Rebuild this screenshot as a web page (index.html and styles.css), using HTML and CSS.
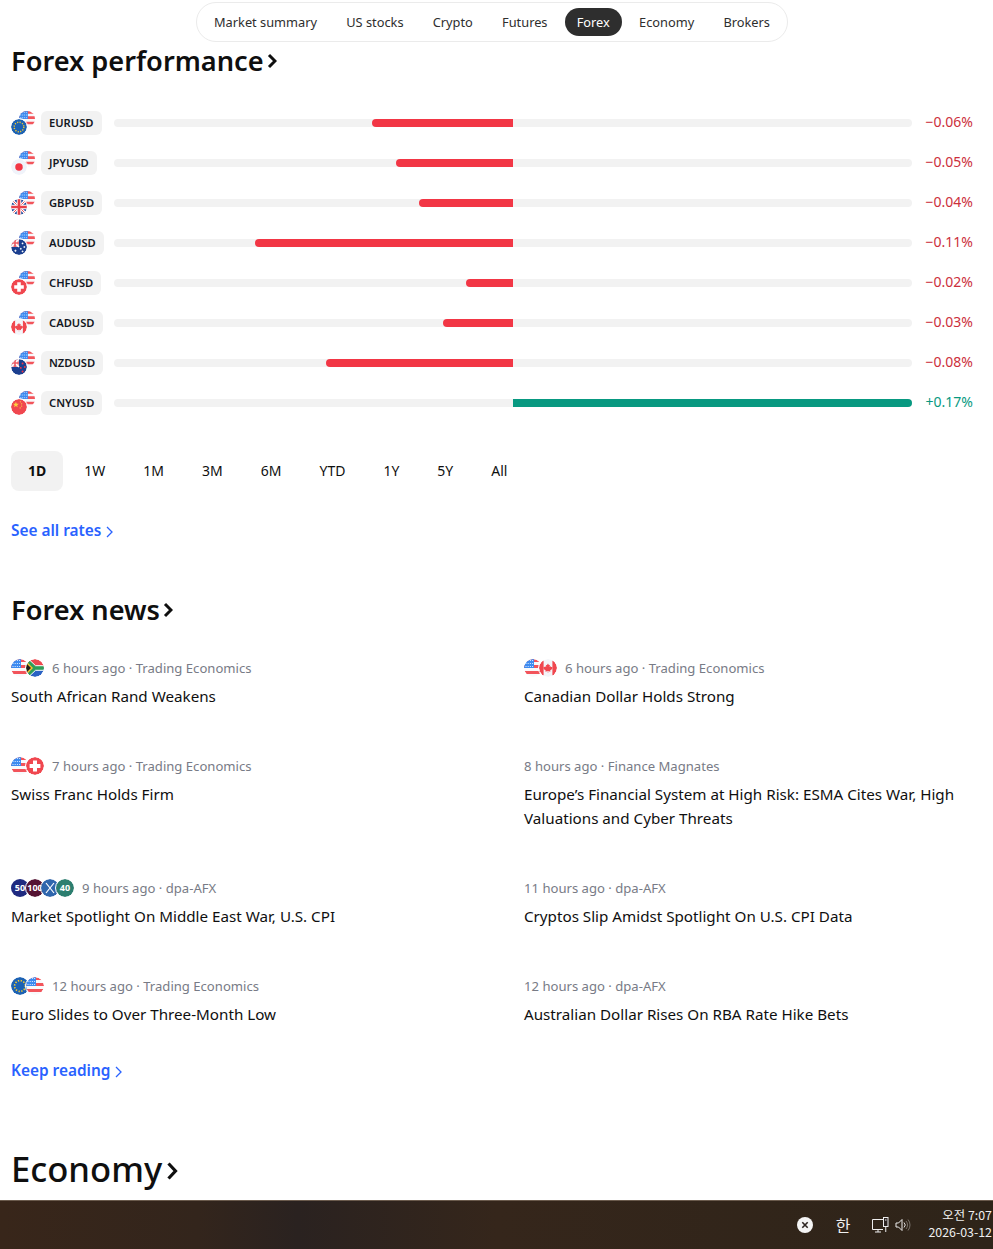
FILE: index.html
```html
<!DOCTYPE html>
<html lang="en">
<head>
    <meta charset="UTF-8">
    <meta name="viewport" content="width=device-width, initial-scale=1.0">
    <title>Forex</title>
    <link rel="stylesheet" href="styles.css">
</head>
<body>
    <svg class="defs" width="0" height="0" aria-hidden="true">
        <defs>
            <clipPath id="disc"><circle cx="9" cy="9" r="9"/></clipPath>
            <symbol id="us" viewBox="0 0 18 18"><g clip-path="url(#disc)">
                <rect width="18" height="18" fill="#f9f9fb"/>
                <path d="M0 0h18v3H0zM0 6h18v3H0zM0 12h18v3H0z" fill="#f2545b"/>
                <rect width="10" height="9" fill="#3d8bf0"/>
                <path d="M1.5 1.500h8M1.500 4.500h8M1.500 7.500h8" stroke="#dbe9ff" stroke-width="1" stroke-dasharray="1 1.200"/>
            </g></symbol>
            <symbol id="eu" viewBox="0 0 18 18"><g clip-path="url(#disc)">
                <rect width="18" height="18" fill="#1c62b4"/>
                <circle cx="9" cy="9" r="5.400" fill="none" stroke="#f5c92e" stroke-width="1.600" stroke-dasharray="1.300 1.530"/>
            </g></symbol>
            <symbol id="jp" viewBox="0 0 18 18">
                <circle cx="9" cy="9" r="9" fill="#f0f3fa"/>
                <circle cx="9" cy="9" r="4.200" fill="#f23645"/>
            </symbol>
            <symbol id="gb" viewBox="0 0 18 18"><g clip-path="url(#disc)">
                <rect width="18" height="18" fill="#1f4a9c"/>
                <path d="M0 0l18 18M18 0L0 18" stroke="#fff" stroke-width="3"/>
                <path d="M0 0l18 18M18 0L0 18" stroke="#e8404a" stroke-width="1"/>
                <path d="M9 0v18M0 9h18" stroke="#fff" stroke-width="5"/>
                <path d="M9 0v18M0 9h18" stroke="#e8404a" stroke-width="3"/>
            </g></symbol>
            <symbol id="au" viewBox="0 0 18 18"><g clip-path="url(#disc)">
                <rect width="18" height="18" fill="#1b3f8f"/>
                <rect width="9" height="9" fill="#e9a0a8"/>
                <path d="M0 0l9 9M9 0L0 9" stroke="#fff" stroke-width="1.600"/>
                <path d="M4.500 0v9M0 4.500h9" stroke="#e8404a" stroke-width="1.400"/>
                <path d="M13 4v2M12 5h2M15 8v2M14 9h2M11 10v2M10 11h2M13 13v2M12 14h2M5 12v2.400M3.800 13.200h2.400" stroke="#fff" stroke-width="1"/>
            </g></symbol>
            <symbol id="nz" viewBox="0 0 18 18"><g clip-path="url(#disc)">
                <rect width="18" height="18" fill="#1b3f8f"/>
                <rect width="9" height="9" fill="#e9a0a8"/>
                <path d="M0 0l9 9M9 0L0 9" stroke="#fff" stroke-width="1.600"/>
                <path d="M4.500 0v9M0 4.500h9" stroke="#e8404a" stroke-width="1.400"/>
                <g fill="#f23645"><circle cx="13" cy="5" r="1.100"/><circle cx="15.500" cy="9" r="1.100"/><circle cx="11" cy="10" r="1.100"/><circle cx="13" cy="14" r="1.100"/></g>
            </g></symbol>
            <symbol id="ch" viewBox="0 0 18 18">
                <circle cx="9" cy="9" r="9" fill="#f0474f"/>
                <path d="M7 3.600h4V7h3.400v4H11v3.400H7V11H3.600V7H7z" fill="#fff"/>
            </symbol>
            <symbol id="ca" viewBox="0 0 18 18"><g clip-path="url(#disc)">
                <rect width="18" height="18" fill="#f4f5f9"/>
                <rect width="4.600" height="18" fill="#f0474f"/>
                <rect x="13.400" width="4.600" height="18" fill="#f0474f"/>
                <path d="M9 4.400l1 1.800 1-.5-.4 2.400 1.200-.9.4.9 1.200-.2-.4 1.500.5.400-2.400 1.800.3 1.100L9.200 12v2h-.4v-2l-2.400.7.3-1.100-2.400-1.800.5-.4-.4-1.500 1.200.2.4-.9 1.200.9-.4-2.400 1 .5z" fill="#f0474f"/>
            </g></symbol>
            <symbol id="cn" viewBox="0 0 18 18"><g clip-path="url(#disc)">
                <rect width="18" height="18" fill="#f0474f"/>
                <path d="M5.500 3l.9 2.300 2.400.1-1.900 1.500.7 2.300-2.100-1.300-2.100 1.300.7-2.300-1.900-1.500 2.400-.1z" fill="#fcd13f"/>
                <g fill="#fcd13f"><circle cx="10.500" cy="3.200" r=".7"/><circle cx="12" cy="5.400" r=".7"/><circle cx="12" cy="8" r=".7"/><circle cx="10.300" cy="10" r=".7"/></g>
            </g></symbol>
            <symbol id="za" viewBox="0 0 18 18"><g clip-path="url(#disc)">
                <rect width="18" height="9" fill="#ee4a4f"/>
                <rect y="9" width="18" height="9" fill="#2a62c4"/>
                <path d="M0 0h2.500l7 6.700H18v4.600H9.500l-7 6.700H0z" fill="#2f9e58"/>
                <path d="M2.500 0l7 6.700H18M18 11.300H9.500l-7 6.700" fill="none" stroke="#fff" stroke-width="1"/>
                <path d="M0 2l7 7-7 7z" fill="#f7c52e"/>
                <path d="M0 4l5 5-5 5z" fill="#1c1c1c"/>
            </g></symbol>
        </defs>
    </svg>

    <main class="page">
        <nav class="subnav">
            <a>Market summary</a>
            <a>US stocks</a>
            <a>Crypto</a>
            <a>Futures</a>
            <a class="active">Forex</a>
            <a>Economy</a>
            <a>Brokers</a>
        </nav>

        <h2 class="heading">Forex performance<svg class="heading-arrow" viewBox="0 0 10 16"><path d="M2 2l6 6-6 6"/></svg></h2>

        <div class="rates">
            <div class="rate">
                <span class="pair"><svg class="flag back"><use href="#us"/></svg><svg class="flag front"><use href="#eu"/></svg></span>
                <span class="ticker">EURUSD</span>
                <div class="track"><div class="half left"><div class="fill down" style="width: 35.3%"></div></div><div class="half"></div></div>
                <span class="value neg">−0.06%</span>
            </div>
            <div class="rate">
                <span class="pair"><svg class="flag back"><use href="#us"/></svg><svg class="flag front"><use href="#jp"/></svg></span>
                <span class="ticker">JPYUSD</span>
                <div class="track"><div class="half left"><div class="fill down" style="width: 29.4%"></div></div><div class="half"></div></div>
                <span class="value neg">−0.05%</span>
            </div>
            <div class="rate">
                <span class="pair"><svg class="flag back"><use href="#us"/></svg><svg class="flag front"><use href="#gb"/></svg></span>
                <span class="ticker">GBPUSD</span>
                <div class="track"><div class="half left"><div class="fill down" style="width: 23.5%"></div></div><div class="half"></div></div>
                <span class="value neg">−0.04%</span>
            </div>
            <div class="rate">
                <span class="pair"><svg class="flag back"><use href="#us"/></svg><svg class="flag front"><use href="#au"/></svg></span>
                <span class="ticker">AUDUSD</span>
                <div class="track"><div class="half left"><div class="fill down" style="width: 64.7%"></div></div><div class="half"></div></div>
                <span class="value neg">−0.11%</span>
            </div>
            <div class="rate">
                <span class="pair"><svg class="flag back"><use href="#us"/></svg><svg class="flag front"><use href="#ch"/></svg></span>
                <span class="ticker">CHFUSD</span>
                <div class="track"><div class="half left"><div class="fill down" style="width: 11.8%"></div></div><div class="half"></div></div>
                <span class="value neg">−0.02%</span>
            </div>
            <div class="rate">
                <span class="pair"><svg class="flag back"><use href="#us"/></svg><svg class="flag front"><use href="#ca"/></svg></span>
                <span class="ticker">CADUSD</span>
                <div class="track"><div class="half left"><div class="fill down" style="width: 17.6%"></div></div><div class="half"></div></div>
                <span class="value neg">−0.03%</span>
            </div>
            <div class="rate">
                <span class="pair"><svg class="flag back"><use href="#us"/></svg><svg class="flag front"><use href="#nz"/></svg></span>
                <span class="ticker">NZDUSD</span>
                <div class="track"><div class="half left"><div class="fill down" style="width: 46.8%"></div></div><div class="half"></div></div>
                <span class="value neg">−0.08%</span>
            </div>
            <div class="rate">
                <span class="pair"><svg class="flag back"><use href="#us"/></svg><svg class="flag front"><use href="#cn"/></svg></span>
                <span class="ticker">CNYUSD</span>
                <div class="track"><div class="half left"></div><div class="half"><div class="fill up" style="width: 100%"></div></div></div>
                <span class="value pos">+0.17%</span>
            </div>
        </div>

        <div class="ranges">
            <button class="active">1D</button>
            <button>1W</button>
            <button>1M</button>
            <button>3M</button>
            <button>6M</button>
            <button>YTD</button>
            <button>1Y</button>
            <button>5Y</button>
            <button>All</button>
        </div>

        <a class="more rates-more">See all rates<svg viewBox="0 0 7 12"><path d="M1 1l5 5-5 5"/></svg></a>

        <h2 class="heading news-heading">Forex news<svg class="heading-arrow" viewBox="0 0 10 16"><path d="M2 2l6 6-6 6"/></svg></h2>

        <div class="news">
            <article>
                <div class="meta"><span class="icons"><svg class="mini"><use href="#us"/></svg><svg class="mini"><use href="#za"/></svg></span>6 hours ago · Trading Economics</div>
                <h3>South African Rand Weakens</h3>
            </article>
            <article>
                <div class="meta"><span class="icons"><svg class="mini"><use href="#us"/></svg><svg class="mini"><use href="#ca"/></svg></span>6 hours ago · Trading Economics</div>
                <h3>Canadian Dollar Holds Strong</h3>
            </article>
            <article>
                <div class="meta"><span class="icons"><svg class="mini"><use href="#us"/></svg><svg class="mini"><use href="#ch"/></svg></span>7 hours ago · Trading Economics</div>
                <h3>Swiss Franc Holds Firm</h3>
            </article>
            <article>
                <div class="meta">8 hours ago · Finance Magnates</div>
                <h3>Europe’s Financial System at High Risk: ESMA Cites War, High Valuations and Cyber Threats</h3>
            </article>
            <article>
                <div class="meta"><span class="icons">
                    <span class="mini idx navy">50</span><span class="mini idx maroon">100</span><span class="mini idx blue"><svg viewBox="0 0 18 18"><path d="M5 4l8 10M13 4L5 14"/></svg></span><span class="mini idx green">40</span>
                </span>9 hours ago · dpa-AFX</div>
                <h3>Market Spotlight On Middle East War, U.S. CPI</h3>
            </article>
            <article>
                <div class="meta">11 hours ago · dpa-AFX</div>
                <h3>Cryptos Slip Amidst Spotlight On U.S. CPI Data</h3>
            </article>
            <article>
                <div class="meta"><span class="icons"><svg class="mini"><use href="#eu"/></svg><svg class="mini"><use href="#us"/></svg></span>12 hours ago · Trading Economics</div>
                <h3>Euro Slides to Over Three-Month Low</h3>
            </article>
            <article>
                <div class="meta">12 hours ago · dpa-AFX</div>
                <h3>Australian Dollar Rises On RBA Rate Hike Bets</h3>
            </article>
        </div>

        <a class="more news-more">Keep reading<svg viewBox="0 0 7 12"><path d="M1 1l5 5-5 5"/></svg></a>

        <h2 class="heading big">Economy<svg class="heading-arrow" viewBox="0 0 12 20"><path d="M2.500 2.500l7 7.500-7 7.500"/></svg></h2>
    </main>

    <footer class="taskbar">
        <span class="tray-close"><svg viewBox="0 0 16 16"><circle cx="8" cy="8" r="8" fill="#f4f4f4"/><path d="M5.300 5.300l5.400 5.400M10.700 5.300l-5.400 5.400" stroke="#2b2320" stroke-width="1.600"/></svg></span>
        <span class="tray-ime">한</span>
        <svg class="tray-net" viewBox="0 0 17 16"><path d="M11 2.500H.5v10h10.500M3 15h6M6 12.500V15" fill="none" stroke="#eee"/><rect x="11.500" y=".5" width="4.500" height="9" fill="#2b2320" stroke="#eee"/><path d="M13.750 9.500V15M13 3h1.500" stroke="#eee"/></svg>
        <svg class="tray-sound" viewBox="0 0 17 14"><path d="M1 5h2.500L7 1.500v11L3.500 9H1z" fill="none" stroke="#eee"/><path d="M9 4.500a3.500 3.500 0 0 1 0 5" fill="none" stroke="#ddd"/><path d="M11 3a6 6 0 0 1 0 8M13 1.500a8.500 8.500 0 0 1 0 11" fill="none" stroke="#77716a"/></svg>
        <div class="clock"><div>오전 7:07</div><div>2026-03-12</div></div>
    </footer>
</body>
</html>
```

FILE: styles.css
```css
* {
    box-sizing: border-box;
}

body {
    margin: 0;
    height: 1249px;
    overflow: hidden;
    display: flex;
    flex-direction: column;
    background: white;
    color: #131722;
    font-family: "Noto Sans", "Noto Sans CJK KR", sans-serif;
}

.defs {
    display: block;
}

.page {
    height: 1200px;
    overflow: hidden;
    padding: 2px 20px 0 11px;
}

/* top tabs */
.subnav {
    width: 592px;
    height: 40px;
    margin-left: 185px;
    padding: 0 5px;
    display: flex;
    align-items: center;
    justify-content: space-between;
    border: 1px solid #ebebeb;
    border-radius: 20px;
    font-size: 12.8px;
    color: #2e2e2e;
}

.subnav a {
    padding: 0 12px;
    height: 28px;
    line-height: 28px;
    border-radius: 14px;
    white-space: nowrap;
}

.subnav a.active {
    background: #2e2e2e;
    color: white;
}

/* section titles */
.heading {
    margin: 1px 0 0;
    padding-bottom: 2px;
    display: flex;
    align-items: center;
    height: 36px;
    font-size: 27.2px;
    font-weight: 600;
    color: #0f0f0f;
}

.heading-arrow {
    width: 10px;
    height: 16px;
    margin-left: 3px;
    margin-top: 2px;
    fill: none;
    stroke: #0f0f0f;
    stroke-width: 3;
}

.news-heading {
    margin-top: 49px;
}

.big {
    margin-top: 65px;
    padding-bottom: 4px;
    height: 44px;
    font-size: 34.6px;
    font-weight: 500;
}

.big .heading-arrow {
    width: 12px;
    height: 20px;
    margin-left: 4px;
    margin-top: 6px;
    stroke-width: 3.2;
}

/* performance bars */
.rates {
    margin-top: 24px;
}

.rate {
    display: grid;
    grid-template-columns: 24px 67px 798px 1fr;
    align-items: center;
    height: 40px;
}

.pair {
    display: grid;
    width: 24px;
    height: 24px;
}

.pair .flag {
    grid-area: 1 / 1;
    width: 16px;
    height: 16px;
}

.pair .front {
    align-self: end;
    background: white;
    border-radius: 50%;
    outline: 1.5px solid white;
}

.pair .back {
    justify-self: end;
}

.ticker {
    justify-self: start;
    margin-left: 6px;
    padding: 0 8px;
    height: 24px;
    line-height: 23px;
    background: #f2f2f2;
    border-radius: 6px;
    font-size: 11.2px;
    font-weight: 600;
    white-space: nowrap;
}

.track {
    margin-left: 12px;
    display: flex;
    width: 798px;
    height: 8px;
    background: #f2f2f2;
    border-radius: 4px;
}

.half {
    width: 50%;
    display: flex;
}

.half.left {
    justify-content: flex-end;
}

.fill {
    height: 8px;
}

.fill.down {
    background: #f23645;
    border-radius: 4px 0 0 4px;
}

.fill.up {
    background: #089981;
    border-radius: 0 4px 4px 0;
}

.value {
    justify-self: end;
    margin-bottom: 3px;
    font-size: 14px;
    white-space: nowrap;
}

.value.neg {
    color: #cc2f3c;
}

.value.pos {
    color: #089981;
}

/* range tabs */
.ranges {
    margin-top: 28px;
    display: flex;
    gap: 4px;
}

.ranges button {
    height: 40px;
    padding: 0 17px 2px;
    border: none;
    border-radius: 8px;
    background: none;
    color: #0f0f0f;
    font: inherit;
    font-size: 14px;
}

.ranges button.active {
    background: #f2f2f2;
    font-weight: 700;
}

/* links */
.more {
    display: flex;
    align-items: center;
    height: 24px;
    padding-bottom: 1px;
    color: #2962ff;
    font-size: 15.4px;
    font-weight: 600;
}

.more svg {
    width: 7px;
    height: 12px;
    margin-left: 5px;
    margin-top: 2px;
    fill: none;
    stroke: #2962ff;
    stroke-width: 1.3;
}

.rates-more {
    margin-top: 28px;
}

.news-more {
    margin-top: 33px;
}

/* news */
.news {
    margin-top: 31px;
    display: grid;
    grid-template-columns: 489px 449px;
    column-gap: 24px;
    row-gap: 49px;
}

.meta {
    display: flex;
    align-items: center;
    height: 18px;
    padding-bottom: 1px;
    font-size: 13.1px;
    color: #787b86;
    white-space: nowrap;
}

.icons {
    display: flex;
    margin-right: 8px;
    margin-bottom: -1px;
}

.mini {
    display: block;
    width: 18px;
    height: 18px;
    border-radius: 50%;
}

.mini + .mini {
    margin-left: -3px;
    outline: 1px solid white;
}

.idx {
    text-align: center;
    line-height: 18px;
    font-size: 9px;
    font-weight: 700;
    color: white;
    overflow: hidden;
}

.idx svg {
    display: block;
    width: 18px;
    height: 18px;
    fill: none;
    stroke: white;
    stroke-width: 1.2;
}

.navy {
    background: #1f2a80;
}

.maroon {
    background: #551433;
}

.blue {
    background: #2f66ad;
}

.green {
    background: #2c7e6f;
}

.news h3 {
    margin: 7px 0 0;
    font-size: 15.2px;
    font-weight: 400;
    line-height: 24px;
    color: #0f0f0f;
}

/* windows taskbar */
.taskbar {
    height: 49px;
    display: flex;
    align-items: center;
    justify-content: flex-end;
    padding-right: 1px;
    border-top: 1px solid #6a5a4c;
    background: linear-gradient(90deg, #38261a 0%, #33251c 20%, #2a2220 30%, #35261b 50%, #2e2419 100%);
    color: #f0f0f0;
    font-family: "Noto Sans CJK KR", "Noto Sans", sans-serif;
}

.tray-close {
    width: 16px;
    height: 16px;
    margin-right: 23px;
}

.tray-close svg {
    display: block;
}

.tray-ime {
    font-size: 16px;
    margin-right: 22px;
}

.tray-net {
    width: 17px;
    height: 16px;
    margin-right: 6px;
}

.tray-sound {
    width: 17px;
    height: 14px;
    margin-right: 16px;
}

.clock {
    margin-bottom: 3px;
    text-align: right;
    font-size: 12.4px;
    line-height: 17px;
}
```
